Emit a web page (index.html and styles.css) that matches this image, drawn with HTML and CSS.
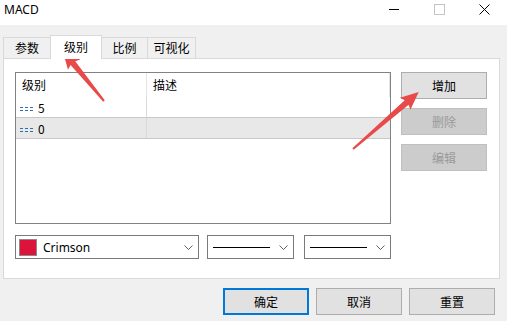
FILE: index.html
```html
<!DOCTYPE html>
<html lang="zh">
<head>
<meta charset="utf-8">
<title>MACD</title>
<link rel="stylesheet" href="styles.css">
</head>
<body>
<div class="window">
  <div class="titlebar">
    <span class="title">MACD</span>
    <div class="winctrls">
      <span class="wc"><svg width="11" height="11" viewBox="0 0 11 11"><line x1="0" y1="5.5" x2="10" y2="5.5" stroke="#000" stroke-width="1"/></svg></span>
      <span class="wc"><svg width="11" height="11" viewBox="0 0 11 11"><rect x="0.5" y="0.5" width="10" height="10" fill="none" stroke="#c4c4c4" stroke-width="1"/></svg></span>
      <span class="wc"><svg width="11" height="11" viewBox="0 0 11 11"><path d="M0.5 0.5 L10.5 10.5 M10.5 0.5 L0.5 10.5" stroke="#000" stroke-width="1"/></svg></span>
    </div>
  </div>
  <div class="client">
    <div class="tabs">
      <div class="tab t1">参数</div>
      <div class="tab t2 active">级别</div>
      <div class="tab t3">比例</div>
      <div class="tab t4">可视化</div>
    </div>
    <div class="panel">
      <div class="panel-top">
        <div class="list">
          <div class="lrow head">
            <div class="c1">级别</div>
            <div class="c2">描述</div>
          </div>
          <div class="lrow item">
            <div class="c1"><svg class="lvl" width="13" height="6" viewBox="0 0 13 6" shape-rendering="crispEdges"><path d="M0 1.5h13M0 4.5h13" stroke="#2f6fae" stroke-width="1" stroke-dasharray="3 2"/></svg>5</div>
            <div class="c2"></div>
          </div>
          <div class="lrow item sel">
            <div class="c1"><svg class="lvl" width="13" height="6" viewBox="0 0 13 6" shape-rendering="crispEdges"><path d="M0 1.5h13M0 4.5h13" stroke="#2f6fae" stroke-width="1" stroke-dasharray="3 2"/></svg>0</div>
            <div class="c2"></div>
          </div>
        </div>
        <div class="side">
          <button class="btn">增加</button>
          <button class="btn" disabled>删除</button>
          <button class="btn" disabled>编辑</button>
        </div>
      </div>
      <div class="selects">
        <div class="combo color">
          <span class="swatch"></span>
          <span class="ctext">Crimson</span>
          <svg class="chev" width="9" height="5" viewBox="0 0 9 5"><path d="M0.5 0.5 L4.5 4.5 L8.5 0.5" fill="none" stroke="#606060" stroke-width="1"/></svg>
        </div>
        <div class="combo line">
          <span class="ln"></span>
          <svg class="chev" width="9" height="5" viewBox="0 0 9 5"><path d="M0.5 0.5 L4.5 4.5 L8.5 0.5" fill="none" stroke="#606060" stroke-width="1"/></svg>
        </div>
        <div class="combo line">
          <span class="ln"></span>
          <svg class="chev" width="9" height="5" viewBox="0 0 9 5"><path d="M0.5 0.5 L4.5 4.5 L8.5 0.5" fill="none" stroke="#606060" stroke-width="1"/></svg>
        </div>
      </div>
    </div>
    <div class="footer">
      <button class="btn default">确定</button>
      <button class="btn">取消</button>
      <button class="btn">重置</button>
    </div>
  </div>
  <svg class="arrows" width="507" height="321" viewBox="0 0 507 321">
    <g transform="translate(104 101) rotate(-129.4)">
      <polygon points="0,-1 49,-3 47,-8 65,0 47,8 49,3 0,1" fill="#e84a4a"/>
    </g>
    <g transform="translate(353 149) rotate(-40.9)">
      <polygon points="0,-1 71,-3 69,-8 87,0 69,8 71,3 0,1" fill="#e84a4a"/>
    </g>
  </svg>
</div>
</body>
</html>
```

FILE: styles.css
```css
* { box-sizing: border-box; }
html, body { margin: 0; padding: 0; }
body {
  width: 507px;
  height: 321px;
  overflow: hidden;
  background: #f0f0f0;
  font-family: "Noto Sans CJK SC", "Noto Sans", sans-serif;
  font-size: 12px;
  color: #000;
}
.window { position: relative; width: 507px; height: 321px; }
.titlebar {
  height: 25px;
  background: #fff;
  display: flex;
  align-items: flex-start;
  justify-content: space-between;
}
.title {
  font-family: "Noto Sans", sans-serif;
  font-size: 12px;
  line-height: 19px;
  padding-left: 4px;
}
.winctrls { display: flex; }
.wc {
  width: 45px;
  height: 19px;
  display: flex;
  align-items: center;
  justify-content: center;
}
.client { display: flex; flex-direction: column; }
.tabs {
  display: flex;
  align-items: flex-end;
  margin-top: 10px;
  margin-left: 3px;
  height: 23px;
}
.tab {
  height: 21px;
  border: 1px solid #d9d9d9;
  border-bottom: none;
  background: #f0f0f0;
  margin-left: -1px;
  display: flex;
  align-items: center;
  justify-content: center;
  line-height: 1;
}
.t1 { margin-left: 0; width: 48px; }
.t2 { width: 52px; }
.t3 { width: 47px; }
.t4 { width: 49px; }
.tab.active {
  height: 24px;
  background: #fff;
  position: relative;
  z-index: 2;
  margin-bottom: -1px;
  align-items: flex-start;
  padding-top: 5px;
}
.panel {
  margin-left: 3px;
  width: 497px;
  height: 221px;
  background: #fff;
  border: 1px solid #d9d9d9;
  padding: 13px 0 0 11px;
  display: flex;
  flex-direction: column;
}
.panel-top { display: flex; align-items: flex-start; }
.list {
  width: 376px;
  height: 152px;
  border: 1px solid #828282;
  background: #fff;
  display: flex;
  flex-direction: column;
}
.lrow { display: flex; }
.lrow.head { height: 24px; }
.lrow.head .c1, .lrow.head .c2 { border-right: 1px solid #e5e5e5; padding-bottom: 1px; }
.lrow.head .c1 { padding-left: 6px; }
.lrow.head .c2 { width: 243px; padding-left: 6px; display: flex; align-items: center; }
.c1 { width: 131px; display: flex; align-items: center; }
.c2 { flex: none; }
.lrow.item {
  height: 21px;
  border-bottom: 1px solid #c8c8c8;
}
.lrow.item .c1 {
  border-right: 1px solid #dadada;
  padding-left: 4px;
}
.lrow.item .c2 { width: 243px; }
.lrow.sel { background: #e8e8e8; }
.lvl { margin-right: 5px; margin-top: 3px; }
.side {
  margin-left: 10px;
  width: 86px;
  display: flex;
  flex-direction: column;
  gap: 9px;
}
.btn {
  width: 86px;
  height: 27px;
  background: #e1e1e1;
  border: 1px solid #adadad;
  font-family: "Noto Sans CJK SC", sans-serif;
  font-size: 12px;
  color: #000;
  padding: 0;
  margin: 0;
}
.btn:disabled {
  background: #cccccc;
  border-color: #bfbfbf;
  color: #9a9a9a;
}
.btn.default { border: 2px solid #0078d7; }
.selects {
  display: flex;
  margin-top: 11px;
  height: 24px;
}
.combo {
  height: 24px;
  border: 1px solid #7a7a7a;
  background: #fff;
  display: flex;
  align-items: center;
}
.combo.color { width: 184px; padding-left: 3px; padding-right: 5px; }
.combo.line { width: 87px; padding-left: 5px; padding-right: 5px; margin-left: 8px; }
.combo.line + .combo.line { margin-left: 10px; }
.swatch {
  width: 18px;
  height: 17px;
  background: #dc143c;
  border: 1px solid #8a8a8a;
}
.ctext {
  margin-left: 6px;
  flex: 1;
  font-family: "Noto Sans", sans-serif;
  font-size: 12px;
}
.ln { width: 57px; height: 1px; background: #000; margin-right: auto; }
.chev { margin-left: 4px; }
.footer {
  display: flex;
  justify-content: flex-end;
  gap: 7px;
  margin-top: 9px;
  padding-right: 12px;
}
.arrows { position: absolute; left: 0; top: 0; pointer-events: none; }
```
